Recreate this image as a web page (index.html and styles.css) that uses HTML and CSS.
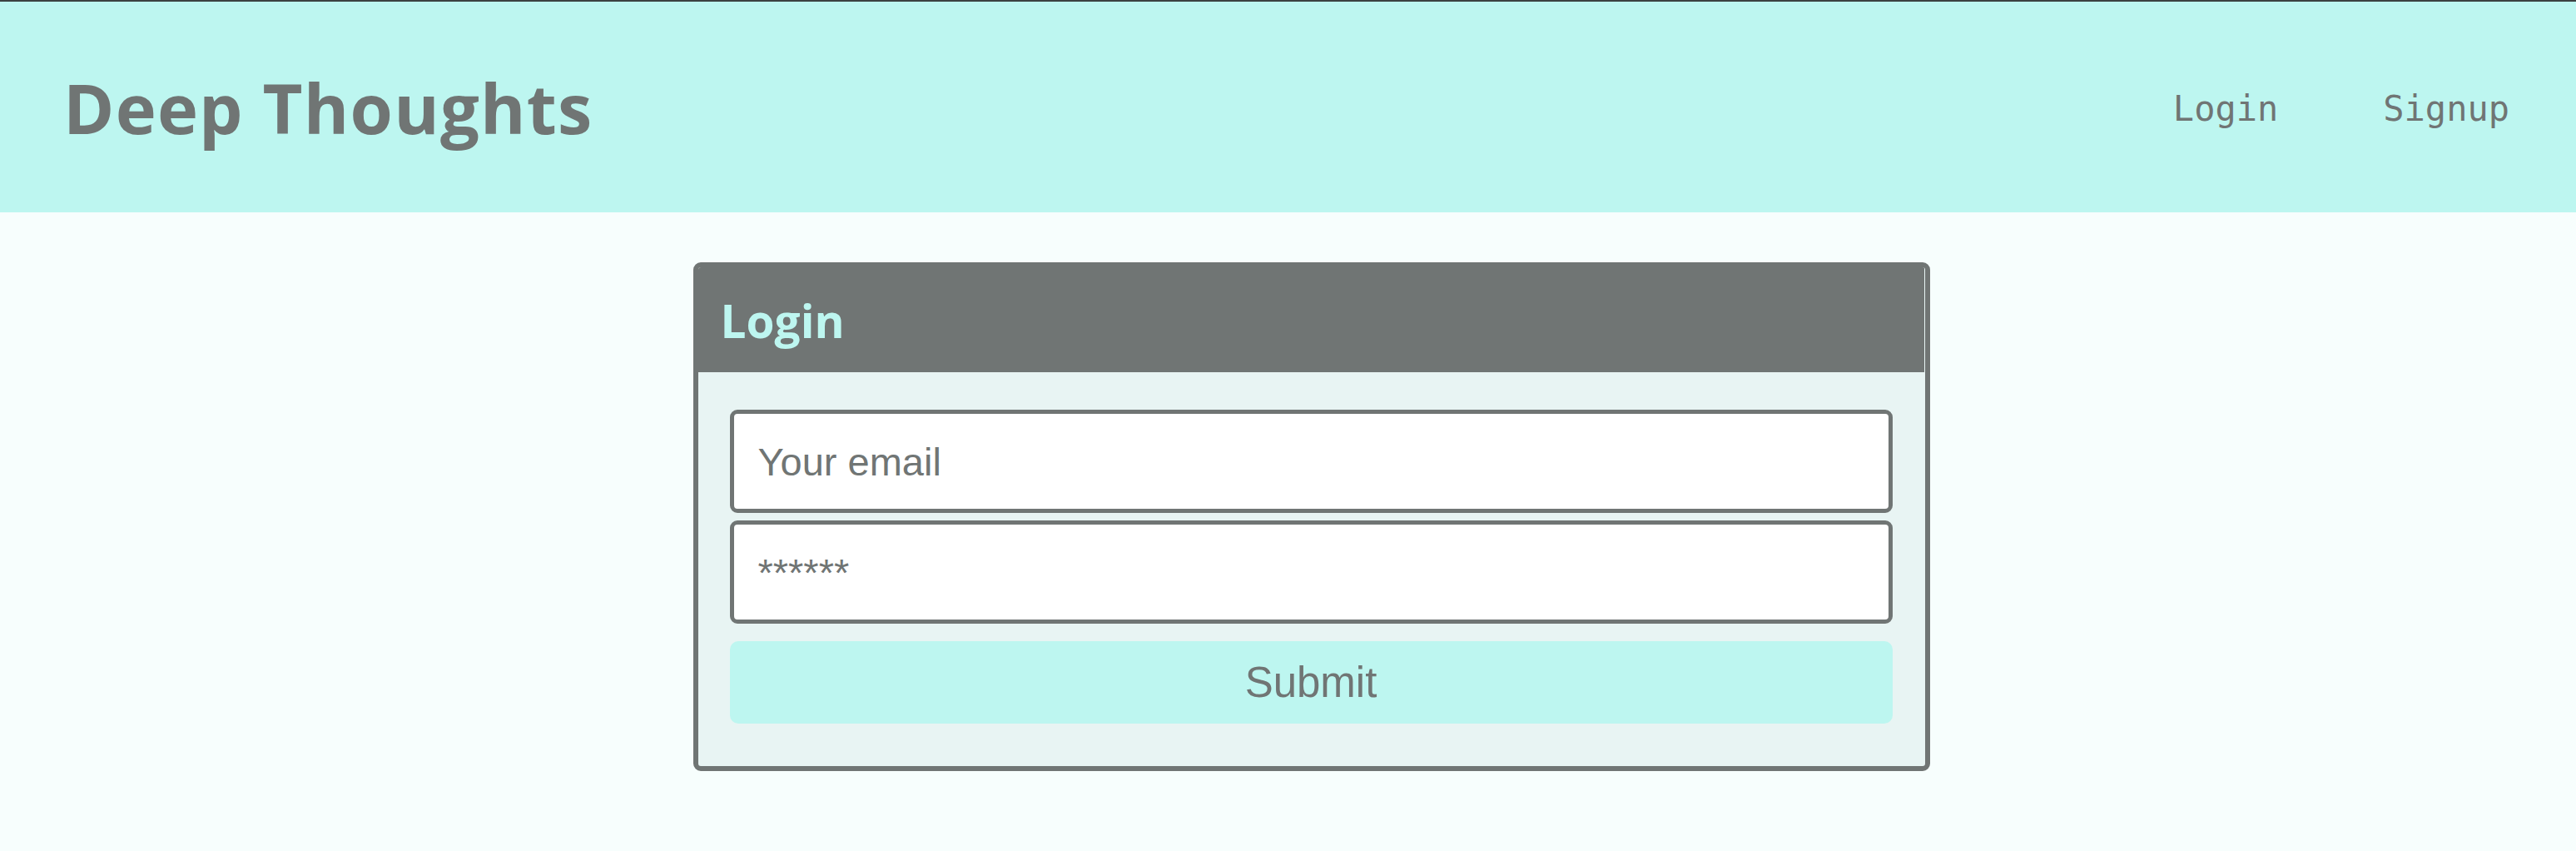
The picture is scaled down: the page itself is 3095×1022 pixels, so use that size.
FILE: index.html
```html
<!DOCTYPE html>
<html lang="en">
<head>
<meta charset="utf-8">
<title>Deep Thoughts</title>
<link rel="stylesheet" href="styles.css">
</head>
<body>
<header class="site-header">
  <h1 class="brand">Deep Thoughts</h1>
  <nav class="nav">
    <a class="nav-link" href="#">Login</a>
    <a class="nav-link" href="#">Signup</a>
  </nav>
</header>
<main class="main">
  <section class="card">
    <h2 class="card-header">Login</h2>
    <div class="card-body">
      <form class="form">
        <input class="form-input" type="email" placeholder="Your email">
        <input class="form-input" type="password" placeholder="******">
        <button class="btn" type="button">Submit</button>
      </form>
    </div>
  </section>
</main>
</body>
</html>
```
FILE: styles.css
```css
* { box-sizing: border-box; }

html, body {
  margin: 0;
  padding: 0;
}

body {
  background: #f7fefd;
  color: #707574;
  font-family: "Open Sans", sans-serif;
}

.site-header {
  border-top: 2px solid #3c4141;
  background: #bdf6f0;
  height: 255px;
  display: flex;
  align-items: center;
  justify-content: space-between;
  padding: 0 80px 0 76px;
}

.brand {
  margin: 0;
  font-family: "Open Sans", sans-serif;
  font-weight: 700;
  font-size: 83px;
  line-height: 1;
  color: #707574;
  letter-spacing: 1.2px;
}

.nav {
  display: flex;
  gap: 126px;
  padding-top: 4px;
}

.nav-link {
  font-family: "DejaVu Sans Mono", "Liberation Mono", monospace;
  font-size: 42px;
  color: #707574;
  text-decoration: none;
}

.main {
  display: flex;
  justify-content: center;
  padding: 60px 0 0 56px;
}

.card {
  width: 1486px;
  border: 6px solid #707574;
  border-radius: 9px;
  background: #e8f4f3;
  overflow: hidden;
}

.card-header {
  margin: 0 1px 0 0;
  height: 126px;
  display: flex;
  align-items: center;
  padding-left: 27px;
  background: #707574;
  color: #bdf6f0;
  font-family: "Open Sans", sans-serif;
  font-weight: 700;
  font-size: 55px;
}

.card-body {
  padding: 45px 39px 51px 38px;
}

.form {
  display: flex;
  flex-direction: column;
  gap: 9px;
}

.form-input {
  width: 100%;
  height: 124px;
  border: 5px solid #707574;
  border-radius: 9px;
  background: #ffffff;
  padding: 0 29px;
  font-family: "Liberation Sans", Arial, sans-serif;
  font-size: 47px;
  color: #707574;
  outline: none;
}

.form-input::placeholder {
  color: #707574;
  opacity: 1;
}

.btn {
  margin-top: 12px;
  width: 100%;
  height: 99px;
  border: none;
  border-radius: 10px;
  background: #bdf6f0;
  font-family: "Liberation Sans", Arial, sans-serif;
  font-size: 51px;
  color: #707574;
  cursor: pointer;
}
```
